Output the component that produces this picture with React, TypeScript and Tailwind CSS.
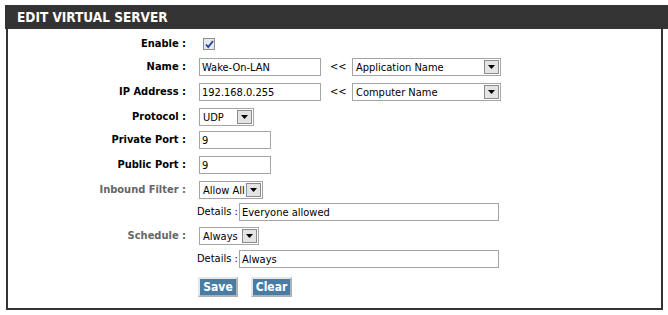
import React from 'react';

const font = "font-['DejaVu_Sans_Condensed','DejaVu_Sans',sans-serif] font-stretch-condensed";

const Select: React.FC<{ value: string; width: string }> = ({ value, width }) => (
  <div className={`${width} h-[18px] flex items-center justify-between border border-[#a5a5a5] bg-white pl-[3px] pr-[1px]`}>
    <span className="text-[11px] text-black leading-none whitespace-nowrap">{value}</span>
    <span className="w-[15px] h-[14px] shrink-0 flex items-center justify-center bg-[#e4e4e4] border border-[#8c8c8c]">
      <svg width="7" height="4" viewBox="0 0 7 4">
        <path d="M0 0h7L3.5 4z" fill="#000" />
      </svg>
    </span>
  </div>
);

const TextInput: React.FC<{ value: string; width: string }> = ({ value, width }) => (
  <div className={`${width} h-[18px] flex items-center border border-[#a5a5a5] bg-white px-[2px]`}>
    <span className="text-[11px] text-black leading-none whitespace-nowrap">{value}</span>
  </div>
);

const Row: React.FC<{ label?: string; muted?: boolean; mt: string; children: React.ReactNode }> = ({ label, muted, mt, children }) => (
  <div className={`flex items-center h-[18px] ${mt}`}>
    <div className={`w-[178px] text-right text-[11px] font-bold whitespace-nowrap ${muted ? 'text-[#666666]' : 'text-black'}`}>
      {label}
    </div>
    <div className="flex items-center pl-[13px]">{children}</div>
  </div>
);

const Button: React.FC<{ label: string; width: string }> = ({ label, width }) => (
  <button className={`${width} h-[20px] bg-[#4a7ca3] text-white text-[12px] font-bold border-2 border-t-[#e6e6e6] border-l-[#e6e6e6] border-r-[#b0b0b0] border-b-[#b0b0b0] leading-none`}>
    {label}
  </button>
);

const App: React.FC = () => {
  return (
    <div className={`pl-[5px] pt-[5px] bg-white w-[668px] h-[315px] ${font}`}>
      <div className="w-[663px] h-[24px] bg-[#333333] flex items-center pl-[12px]">
        <span className="text-white text-[13.5px] font-bold">EDIT VIRTUAL SERVER</span>
      </div>
      <div className="ml-[1px] w-[657px] h-[281px] border-x-2 border-b-2 border-[#333333] pt-[6px]">
        <Row label="Enable :" mt="mt-0">
          <span className="ml-[4px] w-[12px] h-[12px] flex items-center justify-center border border-[#8e8f8f] bg-[#e6e8ee]">
            <svg width="9" height="9" viewBox="0 0 9 9">
              <path d="M1 4.5l2.2 2.6L8 1" stroke="#21429b" strokeWidth="1.8" fill="none" />
            </svg>
          </span>
        </Row>
        <Row label="Name :" mt="mt-[5px]">
          <TextInput value="Wake-On-LAN" width="w-[122px]" />
          <span className="ml-[9px] text-[11px] text-black w-[22px]">&lt;&lt;</span>
          <Select value="Application Name" width="w-[149px]" />
        </Row>
        <Row label="IP Address :" mt="mt-[7px]">
          <TextInput value="192.168.0.255" width="w-[122px]" />
          <span className="ml-[9px] text-[11px] text-black w-[22px]">&lt;&lt;</span>
          <Select value="Computer Name" width="w-[149px]" />
        </Row>
        <Row label="Protocol :" mt="mt-[7px]">
          <Select value="UDP" width="w-[55px]" />
        </Row>
        <Row label="Private Port :" mt="mt-[5px]">
          <TextInput value="9" width="w-[72px]" />
        </Row>
        <Row label="Public Port :" mt="mt-[7px]">
          <TextInput value="9" width="w-[72px]" />
        </Row>
        <Row label="Inbound Filter :" muted mt="mt-[7px]">
          <Select value="Allow All" width="w-[64px]" />
        </Row>
        <Row mt="mt-[4px]">
          <span className="-ml-[2px] w-[42px] text-[11px] text-black whitespace-nowrap">Details :</span>
          <TextInput value="Everyone allowed" width="w-[260px]" />
        </Row>
        <Row label="Schedule :" muted mt="mt-[6px]">
          <Select value="Always" width="w-[60px]" />
        </Row>
        <Row mt="mt-[5px]">
          <span className="-ml-[2px] w-[42px] text-[11px] text-black whitespace-nowrap">Details :</span>
          <TextInput value="Always" width="w-[260px]" />
        </Row>
        <div className="flex items-center mt-[9px] pl-[190px] gap-[13px]">
          <Button label="Save" width="w-[40px]" />
          <Button label="Clear" width="w-[41px]" />
        </div>
      </div>
    </div>
  );
};

export default App;
